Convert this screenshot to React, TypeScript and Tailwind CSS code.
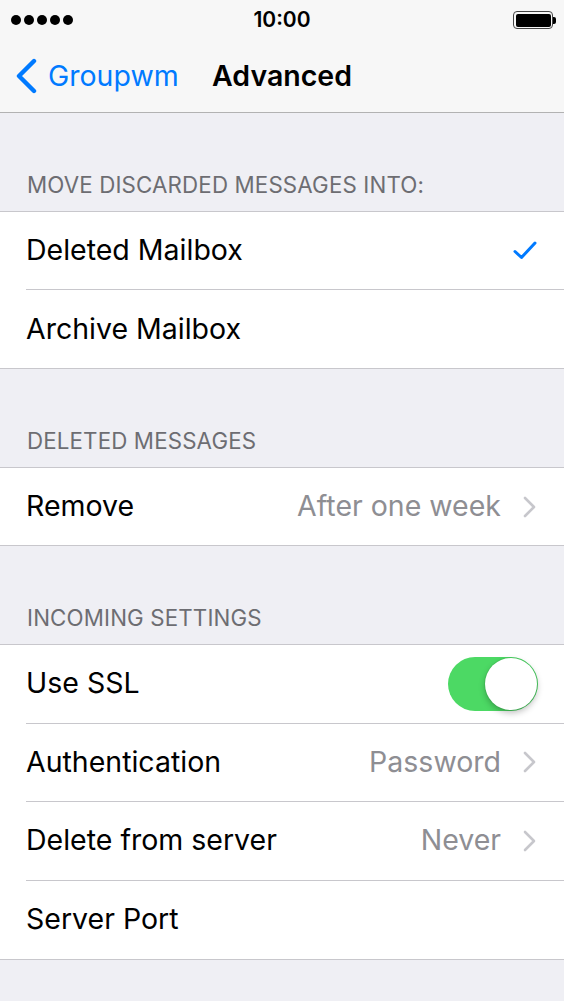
import { ReactNode } from "react";

const font = { fontFamily: "Inter, 'Noto Sans', sans-serif" };

function Chevron() {
  return (
    <svg width="14" height="22" viewBox="0 0 14 22" className="ml-[22px]">
      <path d="M2 2l9 9-9 9" fill="none" stroke="#c7c7cc" strokeWidth="2.6" strokeLinecap="round" strokeLinejoin="round" />
    </svg>
  );
}

function Check() {
  return (
    <svg width="24" height="19" viewBox="0 0 24 19">
      <path d="M2 10.5l6.5 6L22 2" fill="none" stroke="#007aff" strokeWidth="3" strokeLinecap="round" strokeLinejoin="round" />
    </svg>
  );
}

function Toggle() {
  return (
    <div className="relative h-[54px] w-[90px] rounded-full bg-[#4cd964]">
      <div className="absolute right-[1px] top-[1px] h-[52px] w-[52px] rounded-full bg-white shadow-[0_3px_6px_rgba(0,0,0,0.25),0_0_0_1px_rgba(0,0,0,0.06)]" />
    </div>
  );
}

function SectionHeader({ children }: { children: ReactNode }) {
  return (
    <div className="flex h-[98px] items-end pb-[15px] pl-[27px] text-[22.3px] leading-none tracking-[0.15px] text-[#6d6d72]">
      {children}
    </div>
  );
}

function Row({
  label,
  detail,
  right,
  last,
  h = "h-[78px]",
}: {
  label: string;
  detail?: string;
  right?: ReactNode;
  last?: boolean;
  h?: string;
}) {
  return (
    <div className="pl-[26px]">
      <div className={`flex ${h} items-center pr-[27px] ${last ? "" : "border-b border-[#c8c7cc]"}`}>
        <span className="flex-1 text-[28.5px] text-black">{label}</span>
        {detail && <span className="text-[28.5px] text-[#8e8e93]">{detail}</span>}
        {right}
      </div>
    </div>
  );
}

function Group({ children }: { children: ReactNode }) {
  return <div className="border-y border-[#c8c7cc] bg-white">{children}</div>;
}

export default function App() {
  return (
    <div className="min-h-[1001px] w-[564px] bg-[#efeff4]" style={font}>
      <div className="border-b border-[#b2b2b2] bg-[#f7f7f7]">
        {/* status bar */}
        <div className="relative flex h-[40px] items-center justify-between px-[11px]">
          <div className="flex gap-[3px]">
            {[0, 1, 2, 3, 4].map((i) => (
              <div key={i} className="h-[10px] w-[10px] rounded-full bg-black" />
            ))}
          </div>
          <span className="absolute left-1/2 -translate-x-1/2 text-[21px] font-semibold text-black">10:00</span>
          <div className="mr-[-3px] flex items-center">
            <div className="flex h-[18px] w-[40px] items-center rounded-[4px] border-[1.5px] border-[#444] p-[1.5px]">
              <div className="h-full w-full rounded-[2px] bg-black" />
            </div>
            <div className="h-[7px] w-[3px] rounded-r-[2px] bg-black" />
          </div>
        </div>
        {/* nav bar */}
        <div className="relative flex h-[72px] items-center pl-[14px]">
          <svg width="24" height="36" viewBox="0 0 24 36">
            <path d="M20 3L5 18l15 15" fill="none" stroke="#007aff" strokeWidth="4.4" strokeLinecap="round" strokeLinejoin="round" />
          </svg>
          <span className="ml-[10px] text-[28.5px] text-[#007aff]">Groupwm</span>
          <span className="absolute left-1/2 -translate-x-1/2 text-[28.5px] font-semibold text-black">Advanced</span>
        </div>
      </div>

      <SectionHeader>MOVE DISCARDED MESSAGES INTO:</SectionHeader>
      <Group>
        <Row label="Deleted Mailbox" right={<Check />} />
        <Row label="Archive Mailbox" last />
      </Group>

      <SectionHeader>DELETED MESSAGES</SectionHeader>
      <Group>
        <Row label="Remove" detail="After one week" right={<Chevron />} last h="h-[77px]" />
      </Group>

      <SectionHeader>INCOMING SETTINGS</SectionHeader>
      <Group>
        <div className="pl-[26px]">
          <div className="flex h-[78.5px] items-center border-b border-[#c8c7cc] pr-[26px]">
            <span className="flex-1 text-[28.5px] text-black">Use SSL</span>
            <Toggle />
          </div>
        </div>
        <Row label="Authentication" detail="Password" right={<Chevron />} h="h-[78.5px]" />
        <Row label="Delete from server" detail="Never" right={<Chevron />} h="h-[78.5px]" />
        <Row label="Server Port" last h="h-[78.5px]" />
      </Group>
    </div>
  );
}
